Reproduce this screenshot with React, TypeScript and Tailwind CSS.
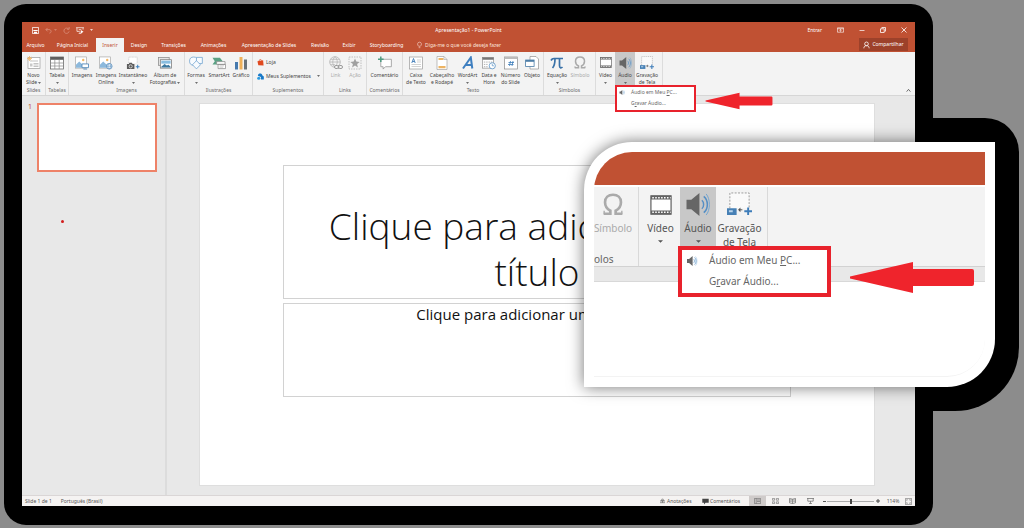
import React from "react";

type IconProps = { className?: string };

const svg = (viewBox: string, children: React.ReactNode) =>
  function Icon({ className = "h-[14px] w-[14px]" }: IconProps) {
    return (
      <svg viewBox={viewBox} className={className} fill="none" aria-hidden="true">
        {children}
      </svg>
    );
  };

const SlideIcon = svg("0 0 14 14", <>
  <rect x="1" y="1.5" width="12" height="11" fill="#fff" stroke="#9a9a9a" strokeWidth=".7" />
  <path d="M3 5h8M6.500 7.500h5M6.500 9h5M6.500 10.500h5" stroke="#a9a9a9" strokeWidth=".7" />
  <path d="M3 7.500h2.500v3H3z" fill="#c9c9c9" />
  <path d="M2.500 0v5M0 2.500h5M.8.8l3.400 3.400M4.200.8.8 4.200" stroke="#f0b568" strokeWidth=".8" />
</>);
const TableIcon = svg("0 0 14 14", <>
  <rect x=".5" y="1" width="13" height="12" fill="#fff" stroke="#6b6b6b" strokeWidth=".8" />
  <path d="M.5 1h13v2.800H.5z" fill="#5f5f5f" />
  <path d="M.5 7h13M.5 10h13M4.800 4v9M9.200 4v9" stroke="#8a8a8a" strokeWidth=".7" />
</>);
const Photo = () => <>
  <rect x=".5" y=".5" width="12" height="12" fill="#fff" stroke="#a3a3a3" strokeWidth=".7" />
  <path d="M1 11V9l3.500-3.500L8 8.500l1.500-1 3 2.500v2H1z" fill="#8db9dc" />
  <circle cx="8.800" cy="3.800" r="1.300" fill="#f2b765" />
</>;
const ImageIcon = svg("0 0 15 14", <>
  <Photo />
  <path d="M7.500 8h7v4h-7z" fill="#fff" stroke="#4e86b8" strokeWidth=".9" />
  <path d="M9 13.500h4" stroke="#4e86b8" strokeWidth=".9" />
</>);
const ImageOnlineIcon = svg("0 0 15 14", <>
  <Photo />
  <circle cx="11" cy="10.500" r="3" fill="#eaf3fb" stroke="#4e86b8" strokeWidth=".8" />
  <path d="M8 10.500h6M11 7.500c-2 2-2 4 0 6 2-2 2-4 0-6" stroke="#4e86b8" strokeWidth=".5" />
</>);
const CameraIcon = svg("0 0 15 14", <>
  <path d="M3 7V.7h9V7" fill="#fff" stroke="#b5b5b5" strokeWidth=".6" strokeDasharray="1 .6" />
  <path d="M1 8h2l.7-1.200h2.600L7 8h2v5.500H1z" fill="#5b5b5b" />
  <circle cx="5" cy="10.600" r="1.700" fill="#5b5b5b" stroke="#fff" strokeWidth=".7" />
  <path d="M12.500 9v4M10.500 11h4" stroke="#3f80bd" strokeWidth="1.100" />
</>);
const AlbumIcon = svg("0 0 15 14", <>
  <rect x=".5" y="1" width="11.500" height="8.500" fill="#e5e5e5" stroke="#8b8b8b" strokeWidth=".8" />
  <rect x="2.500" y="3.500" width="12" height="9" fill="#fff" stroke="#777" strokeWidth=".8" />
  <path d="M3.500 4.500h10v3.200h-10z" fill="#88bde0" />
  <path d="m3.500 11 3.500-3 2.500 1.800 1.700-1 2.300 2.200v.7h-10z" fill="#3c789f" />
</>);
const ShapesIcon = svg("0 0 15 14", <>
  <circle cx="5" cy="5" r="4.400" fill="#f8fbfe" stroke="#6ba0cd" strokeWidth=".8" />
  <path d="M8 1h6.300v6.500H8z" fill="#f8fbfe" stroke="#6ba0cd" strokeWidth=".8" />
  <path d="m8 4.500 4.300 4.400L8 13.300 3.700 8.900z" fill="#f8fbfe" stroke="#6ba0cd" strokeWidth=".8" />
</>);
const SmartArtIcon = svg("0 0 15 14", <>
  <path d="M.5 1.500h8L11.500 5l-3 3.500h-8L3 5z" fill="#5ba184" />
  <path d="M5 5.500h9v3H5zM6.500 8.500h8v4.500h-8z" fill="#fff" stroke="#8c8c8c" strokeWidth=".8" />
  <path d="M8 10h5M8 11.500h4" stroke="#aaa" strokeWidth=".6" />
</>);
const ChartIcon = svg("0 0 14 14", <>
  <path d="M1 6h3v7.500H1z" fill="#4679ad" />
  <path d="M5.500 1h3v12.500h-3z" fill="#eeb05a" />
  <path d="M10 3.500h3v10h-3z" fill="#69727a" />
</>);
const StoreIcon = svg("0 0 8 8", <>
  <path d="m.5 2.500 6.500-1 .5 6L1.500 7z" fill="#e0491f" />
  <path d="M2.500 2.500C2.500-.2 5-.2 5 2" stroke="#e0491f" strokeWidth=".8" />
</>);
const AddinIcon = svg("0 0 8 8", <>
  <path d="M1 3C1 0 6 0 6 2.500L7.800 4v3.500H4.500V4.500z" fill="#1979c8" />
  <circle cx="2" cy="6" r="1.800" fill="#2d9be0" />
</>);
const LinkIcon = svg("0 0 14 14", <>
  <g stroke="#b5b5b5" strokeWidth=".8">
    <circle cx="6" cy="6" r="5.300" />
    <path d="M.7 6h10.600M6 .7c-3 3-3 7.600 0 10.600M6 .7c3 3 3 7 0 10.600M1.500 3.300h9M1.500 8.700H6" />
  </g>
  <rect x="5.500" y="9.500" width="4.500" height="3" rx="1.500" fill="#f3f3f3" stroke="#999" />
  <rect x="9" y="9.500" width="4.500" height="3" rx="1.500" stroke="#999" />
</>);
const ActionIcon = svg("0 0 14 14", <>
  <rect x="1" y="1" width="12" height="12" stroke="#aaa" strokeWidth=".7" strokeDasharray="1.500 1" />
  <path d="m7 2.500 1.300 3.100 3.400.3-2.600 2.200.8 3.300L7 9.600l-2.900 1.800.8-3.300-2.600-2.200 3.400-.3z" fill="#a0a0a0" />
</>);
const CommentIcon = svg("0 0 15 14", <>
  <path d="M3 3h11.300v8H8l-2.500 2.500V11H3z" fill="#fff" stroke="#8f8f8f" strokeWidth=".8" />
  <path d="M3 0v6M0 3h6" stroke="#4e9b80" strokeWidth="1.600" />
</>);
const TextBoxIcon = svg("0 0 14 14", <>
  <rect x=".6" y="1" width="12.800" height="12" fill="#fff" stroke="#9b9b9b" strokeWidth=".7" />
  <path d="m2.800 7 1.700-4.500L6.200 7M3.400 5.500h2.200" stroke="#3b78b5" strokeWidth=".9" />
  <path d="M8 4h4M8 6h4M2.500 8.500H12M2.500 10.500H12" stroke="#c0c0c0" strokeWidth=".7" />
</>);
const HeaderIcon = svg("0 0 12 14", <>
  <path d="M1 .5h7l3 3v10H1z" fill="#fff" stroke="#a5a5a5" strokeWidth=".7" />
  <path d="M2.500 2h5v2h-5zM2.500 10h7v2.200h-7z" fill="#edb463" />
  <path d="M8 .5v3h3" stroke="#a5a5a5" strokeWidth=".6" />
</>);
const WordArtIcon = svg("0 0 14 14", <>
  <path d="M2 12.500 9.800 1.500l1.500 11M5 9h5.500" stroke="#3e7fc0" strokeWidth="2" />
</>);
const DateIcon = svg("0 0 15 14", <>
  <rect x=".5" y="1" width="12" height="11.500" fill="#fff" stroke="#8b8b8b" strokeWidth=".7" />
  <path d="M.5 1h12v2.500H.5z" fill="#777" />
  <path d="M2 6h9M2 8.500h5M2 11h5" stroke="#aaa" strokeDasharray="1.500 1" />
  <circle cx="11" cy="10" r="3.300" fill="#fff" stroke="#4d8ac1" strokeWidth=".8" />
  <path d="M11 8v2h1.800" stroke="#4d8ac1" strokeWidth=".7" />
</>);
const NumberIcon = svg("0 0 14 14", <>
  <rect x=".5" y="1" width="13" height="12" fill="#fff" stroke="#8b8b8b" strokeWidth=".7" />
  <path d="M.5 1h13v2H.5z" fill="#bcbcbc" />
  <path d="m6.500 5-1 5M9 5l-1 5M4.500 6.500H10M4 8.500h5.500" stroke="#3c7cba" strokeWidth=".8" />
</>);
const ObjectIcon = svg("0 0 14 14", <>
  <path d="M5 .5h6l2.500 2.500v10H5z" fill="#fff" stroke="#929292" strokeWidth=".7" />
  <rect x=".6" y="4" width="8.500" height="6.500" fill="#fff" stroke="#4d7ea8" strokeWidth=".8" />
  <path d="M.6 4h8.500v1.800H.6z" fill="#4d7ea8" />
</>);
const PiIcon = svg("0 0 14 14", <>
  <path d="M1 4.500C2 2.500 3 2.500 4 2.500h9M5 2.800c0 4-.5 7-2.500 9.200M9.500 2.800V9.500c0 2.500 1.500 3 3 1.500" stroke="#3a72a8" strokeWidth="1.700" />
</>);
const OmegaIcon = svg("0 0 24 26", <>
  <path d="M1.500 23.500H9V20C5 18 3 14.500 3 10.500 3 5 6.800 2 12 2s9 3 9 8.500c0 4-2 7.500-6 9.500v3.500h7.500" stroke="#aaa" strokeWidth="3" />
  <path d="M2 20v4M22 20v4" stroke="#aaa" strokeWidth="1.500" />
</>);
const VideoIcon = svg("0 0 24 24", <>
  <rect x="1" y="2" width="22" height="20" fill="#fff" stroke="#5f5f5f" strokeWidth="1.300" />
  <path d="M1 2h22v4H1zM1 18h22v4H1z" fill="#626262" />
  <path d="M2.500 4h20M2.500 20h20" stroke="#fff" strokeWidth="1.700" strokeDasharray="1.700 1.500" />
</>);
const SpeakerIcon = svg("0 0 24 24", <>
  <path d="M0 7h5l8.500-7v24L5 17H0z" fill="#666" />
  <path d="M16 7.500c2.500 2 2.500 7 0 9" stroke="#558fc5" strokeWidth="1.500" />
  <path d="M18 3.500c5 4 5 13 0 17" stroke="#558fc5" strokeWidth="1.600" />
  <path d="M20.500 1c4.500 5 4.500 17 0 22" stroke="#72a5d1" strokeWidth="1" />
</>);
const RecordIcon = svg("0 0 26 26", <>
  <path d="M3 17V1h20v16" fill="#fafafa" stroke="#999" strokeWidth="1" strokeDasharray="2 1.500" />
  <path d="M0 17h10v7H0z" fill="#4680b5" />
  <path d="M2 19h4v2H2z" fill="#b9d4ec" />
  <path d="M14 16v5l-2.500-2.500z" fill="#555" />
  <path d="M13 18.500h3" stroke="#555" />
  <path d="M22 16v8M18 20h8" stroke="#3d7cb9" strokeWidth="2" />
</>);
const SaveIcon = svg("0 0 8 8", <>
  <path d="M.5.500h7v7h-7z" stroke="#fff" strokeWidth=".9" />
  <path d="M1.500 3.500h5v1h-5zM2.200 5.500h3.600v2H2.200z" fill="#fff" />
</>);
const UndoIcon = svg("0 0 8 8", <path d="M3 1 1 3l2 2M1 3h3.500c3.500 0 3 4 .5 4" stroke="#d98d78" />);
const RedoIcon = svg("0 0 8 8", <path d="M6.500 2.500A3 3 0 1 0 7 5M4.500 2.500H7V0" stroke="#d98d78" />);
const PresentIcon = svg("0 0 9 8", <>
  <path d="M0 .8h9M1 1v4h3M8 1v2M3 3h3M4.500 5v2M3 7.500h3" stroke="#fff" strokeWidth=".8" />
  <path d="m5.500 3.500 3 2-3 2z" fill="#fff" />
</>);
const BulbIcon = svg("0 0 6 8", <path d="M2 5.500C0 4 .3.600 3 .600s3 3.400 1 4.900zM2 7.200h2" stroke="#fbe3dc" strokeWidth=".7" />);
const RibbonIcon = svg("0 0 8 6", <path d="M.5.500h7v5h-7zM.5 1.600h7M4 5V2.500M2.800 3.500 4 2.400l1.200 1.100" stroke="#fff" strokeWidth=".7" />);
const MinIcon = svg("0 0 6 6", <path d="M.5 3.500h5" stroke="#fff" strokeWidth=".7" />);
const RestoreIcon = svg("0 0 6 6", <path d="M.5 1.800h3.700v3.700H.5zM1.800 1.500V.500h3.700v3.700h-1" stroke="#fff" strokeWidth=".8" />);
const CloseIcon = svg("0 0 6 6", <path d="m.5.500 5 5M5.500.500l-5 5" stroke="#fff" strokeWidth=".8" />);
const PersonIcon = svg("0 0 8 8", <>
  <circle cx="4" cy="2.700" r="2.100" stroke="#fff" strokeWidth=".9" />
  <path d="M1 7.800c0-2 1-3 3-3s3 1 3 3" stroke="#fff" strokeWidth=".9" />
</>);
const NotesIcon = svg("0 0 6 6", <path d="M0 3h6M0 5h6M3 .3 1.300 2.300h3.400zM3 3v2" stroke="#555" strokeWidth=".7" />);
const BubbleIcon = svg("0 0 7 7", <path d="M.3.800h6.400v4H3.500L2 6.500V4.800H.3z" fill="#444" />);
const NormalIcon = svg("0 0 7 6", <path d="M.4.400h6.200v5.200H.4zM2.200.400v5.200M3 2h3M3 3.500h3" stroke="#666" strokeWidth=".6" />);
const SorterIcon = svg("0 0 7 6", <path d="M.4.400h2.200v1.800H.4zM4.400.400h2.200v1.800H4.400zM.4 3.800h2.200v1.800H.4zM4.400 3.800h2.200v1.800H4.400z" stroke="#666" strokeWidth=".6" />);
const ReadingIcon = svg("0 0 7 6", <path d="M3.500 1.200.500.500v4.300l3 .7 3-.7V.500zV5.500M1.200 2h1.500M1.200 3.300h1.500M4.300 2h1.500M4.300 3.300h1.500" stroke="#666" strokeWidth=".7" />);
const ShowIcon = svg("0 0 7 6", <path d="M0 .500h7M.8.500v2.700h5.400V.500M3.500 3.200v2.400M2 5.600h3" stroke="#666" strokeWidth=".7" />);
const FitIcon = svg("0 0 7 7", <path d="M.4.400h6.200v6.200H.4zM1.700 2.700v-1h1M4.300 1.700h1v1M5.300 4.300v1h-1M2.700 5.300h-1v-1" stroke="#666" strokeWidth=".6" />);
const ArrowLeft = svg("0 0 126 33", <path d="M1 15.500 64 1v7h59a2 2 0 0 1 2 2v13a2 2 0 0 1-2 2H64v7L1 17.500z" fill="#ef242c" />);

function Caret({ className = "h-[2px] w-[3px]" }: IconProps) {
  return (
    <svg viewBox="0 0 4 2" className={className} aria-hidden="true">
      <path d="M0 0h4L2 2z" fill="currentColor" />
    </svg>
  );
}

type ToolProps = {
  icon: React.ComponentType<IconProps>;
  lines: string[];
  width: string;
  menu?: boolean;
  disabled?: boolean;
  active?: boolean;
  iconClass?: string;
};

function Tool({ icon: Icon, lines, width, menu, disabled, active, iconClass }: ToolProps) {
  const inline = menu && lines.length > 1;
  return (
    <button
      type="button"
      disabled={disabled}
      className={`flex shrink-0 flex-col items-center pt-[3px] ${width} ${active ? "bg-[#c8c8c8]" : ""} ${disabled ? "text-[#aaa]" : "text-[#444]"}`}
    >
      <span className="mb-[2px] flex h-[15px] items-center">
        <Icon className={iconClass} />
      </span>
      {lines.map((line, i) => (
        <span key={line} className="flex h-[7px] items-center gap-px whitespace-nowrap leading-[7px]">
          {line}
          {inline && i === lines.length - 1 && <Caret />}
        </span>
      ))}
      {menu && !inline && (
        <span className="flex h-[7px] items-center">
          <Caret />
        </span>
      )}
    </button>
  );
}

function Group({ label, width, children }: { label: string; width: string; children: React.ReactNode }) {
  return (
    <section aria-label={label || "Mídia"} className={`flex shrink-0 flex-col border-r border-[#dcdcdc] ${width}`}>
      <div className="flex h-[34px]">{children}</div>
      <div className="h-[9px] whitespace-nowrap text-center leading-[9px] text-[#6a6a6a]">{label}</div>
    </section>
  );
}

const tabs = [
  { name: "Arquivo", width: "w-[27px]" },
  { name: "Página Inicial", width: "w-[47px]" },
  { name: "Inserir", width: "w-[28px]" },
  { name: "Design", width: "w-[30px]" },
  { name: "Transições", width: "w-[39px]" },
  { name: "Animações", width: "w-[41px]" },
  { name: "Apresentação de Slides", width: "w-[70px]" },
  { name: "Revisão", width: "w-[32px]" },
  { name: "Exibir", width: "w-[26px]" },
  { name: "Storyboarding", width: "w-[49px]" },
];

function TitleBar() {
  return (
    <header className="bg-[#c05133] text-white">
      <div className="grid h-4 grid-cols-3 items-center">
        <div className="flex items-center gap-[6px] pl-[10px]">
          <button type="button" aria-label="Salvar"><SaveIcon className="h-[7px] w-[7px]" /></button>
          <button type="button" aria-label="Desfazer" className="flex items-center gap-[2px] text-[#d98d78]">
            <UndoIcon className="h-[7px] w-[7px]" />
            <Caret />
          </button>
          <button type="button" aria-label="Refazer"><RedoIcon className="h-[7px] w-[7px]" /></button>
          <button type="button" aria-label="Apresentar"><PresentIcon className="h-[7px] w-[8px]" /></button>
          <button type="button" aria-label="Personalizar"><Caret /></button>
        </div>
        <h1 className="text-center">Apresentação1 - PowerPoint</h1>
        <div className="flex items-center justify-end gap-[15px] pr-2">
          <button type="button">Entrar</button>
          <button type="button" aria-label="Opções da faixa"><RibbonIcon className="h-[6px] w-[7px]" /></button>
          <button type="button" aria-label="Minimizar"><MinIcon className="h-[6px] w-[6px]" /></button>
          <button type="button" aria-label="Restaurar"><RestoreIcon className="h-[6px] w-[6px]" /></button>
          <button type="button" aria-label="Fechar"><CloseIcon className="h-[6px] w-[6px]" /></button>
        </div>
      </div>
      <nav className="flex h-[14px] items-stretch pr-[7px]">
        {tabs.map((t) => (
          <button
            key={t.name}
            type="button"
            className={`whitespace-nowrap text-center ${t.width} ${t.name === "Inserir" ? "bg-[#f3f3f3] text-[#c05133]" : ""}`}
          >
            {t.name}
          </button>
        ))}
        <button type="button" className="ml-[6px] flex items-center gap-[3px] whitespace-nowrap text-[#fbe3dc]">
          <BulbIcon className="h-[8px] w-[5px]" />
          Diga-me o que você deseja fazer
        </button>
        <button type="button" className="mb-px ml-auto flex w-[49px] items-center justify-center gap-[2px] bg-[#9d412a]">
          <PersonIcon className="h-[8px] w-[7px]" />
          Compartilhar
        </button>
      </nav>
    </header>
  );
}

function Ribbon() {
  return (
    <div className="flex h-[44px] border-b border-[#d6d6d6] bg-[#f3f3f3]">
      <Group label="Slides" width="w-[24px]">
        <Tool icon={SlideIcon} lines={["Novo", "Slide"]} width="w-[23px]" menu />
      </Group>
      <Group label="Tabelas" width="w-[23px]">
        <Tool icon={TableIcon} lines={["Tabela"]} width="w-[22px]" menu />
      </Group>
      <Group label="Imagens" width="w-[116px]">
        <Tool icon={ImageIcon} lines={["Imagens"]} width="w-[26px]" />
        <Tool icon={ImageOnlineIcon} lines={["Imagens", "Online"]} width="w-[22px]" />
        <Tool icon={CameraIcon} lines={["Instantâneo"]} width="w-[32px]" menu />
        <Tool icon={AlbumIcon} lines={["Álbum de", "Fotografias"]} width="w-[32px]" menu />
      </Group>
      <Group label="Ilustrações" width="w-[68px]">
        <Tool icon={ShapesIcon} lines={["Formas"]} width="w-[22px]" menu />
        <Tool icon={SmartArtIcon} lines={["SmartArt"]} width="w-[24px]" />
        <Tool icon={ChartIcon} lines={["Gráfico"]} width="w-[20px]" />
      </Group>
      <Group label="Suplementos" width="w-[71px]">
        <div className="flex flex-1 flex-col gap-[6px] whitespace-nowrap pl-1 pt-[6px] text-[#444]">
          <button type="button" className="flex h-2 items-center gap-[2px]">
            <StoreIcon className="h-[7px] w-[7px]" />
            Loja
          </button>
          <button type="button" className="flex h-2 items-center gap-[2px] pr-[3px]">
            <AddinIcon className="h-[7px] w-[7px]" />
            Meus Suplementos
            <span className="ml-auto"><Caret /></span>
          </button>
        </div>
      </Group>
      <Group label="Links" width="w-[43px]">
        <Tool icon={LinkIcon} lines={["Link"]} width="w-[23px]" disabled />
        <Tool icon={ActionIcon} lines={["Ação"]} width="w-[16px]" disabled />
      </Group>
      <Group label="Comentários" width="w-[36px]">
        <Tool icon={CommentIcon} lines={["Comentário"]} width="w-[35px]" />
      </Group>
      <Group label="Texto" width="w-[141px]">
        <Tool icon={TextBoxIcon} lines={["Caixa", "de Texto"]} width="w-[26px]" />
        <Tool icon={HeaderIcon} lines={["Cabeçalho", "e Rodapé"]} width="w-[26px]" />
        <Tool icon={WordArtIcon} lines={["WordArt"]} width="w-[25px]" menu />
        <Tool icon={DateIcon} lines={["Data e", "Hora"]} width="w-[18px]" />
        <Tool icon={NumberIcon} lines={["Número", "do Slide"]} width="w-[25px]" />
        <Tool icon={ObjectIcon} lines={["Objeto"]} width="w-[18px]" />
      </Group>
      <Group label="Símbolos" width="w-[52px]">
        <Tool icon={PiIcon} lines={["Equação"]} width="w-[26px]" menu />
        <Tool icon={OmegaIcon} lines={["Símbolo"]} width="w-[20px]" disabled iconClass="h-[13px] w-[12px]" />
      </Group>
      <Group label="" width="w-[67px]">
        <Tool icon={VideoIcon} lines={["Vídeo"]} width="w-[19px]" menu iconClass="h-[13px] w-[12px]" />
        <div className="relative flex">
          <Tool icon={SpeakerIcon} lines={["Áudio"]} width="w-[20px]" menu active iconClass="h-[12px] w-[13px]" />
          <div role="menu" className="absolute left-0 top-[33px] z-10 w-[81px] border-2 border-[#e8222c] bg-white pb-px text-[#666]">
            <button type="button" role="menuitem" className="flex h-[11px] w-full items-center whitespace-nowrap">
              <span className="flex w-[14px] pl-[2px]"><SpeakerIcon className="h-[5px] w-[6px]" /></span>
              <span>Áudio em Meu <u>P</u>C...</span>
            </button>
            <button type="button" role="menuitem" className="flex h-[11px] w-full items-center whitespace-nowrap pl-[14px]">
              <span>G<u>r</u>avar Áudio...</span>
            </button>
          </div>
          <ArrowLeft className="absolute left-[90px] top-[40px] z-10 h-[18px] w-[68px]" />
        </div>
        <Tool icon={RecordIcon} lines={["Gravação", "de Tela"]} width="w-[24px]" />
      </Group>
      <button type="button" aria-label="Recolher" className="ml-auto self-end pb-[3px] pr-1">
        <svg viewBox="0 0 6 4" className="h-[3px] w-[5px]" fill="none" aria-hidden="true">
          <path d="m.5 3.500 2.500-3 2.500 3" stroke="#444" />
        </svg>
      </button>
    </div>
  );
}

function Workspace() {
  return (
    <main className="flex flex-1 bg-[#e8e8e8]">
      <aside className="w-[145px] border-r-2 border-[#dcdcdc] pl-[6px] pt-[7px]">
        <div className="flex items-start">
          <span className="w-[9px] text-[7px] leading-2 text-[#c05133]">1</span>
          <button type="button" aria-label="Slide 1" className="h-[69px] w-[120px] border-2 border-[#ee8268] bg-white" />
        </div>
        <div className="ml-[33px] mt-12 h-[3px] w-[3px] rounded-full bg-[#d21c1c]" />
      </aside>
      <div className="flex flex-1 pb-[9px] pl-8 pr-10 pt-[7px]">
        <article className="flex flex-1 flex-col gap-1 border border-[#dedede] bg-white px-[83px] pb-[88px] pt-[61px] text-center font-['Open_Sans',sans-serif] text-[#111]">
          <div className="flex h-[134px] flex-col justify-end border border-[#d2d2d2] pb-[3px]">
            <h2 className="text-[37px] font-light leading-[46px]">
              Clique para adicionar um
              <br />
              título
            </h2>
          </div>
          <div className="flex-1 border border-[#d2d2d2]">
            <p className="text-[15px] leading-[20px]">Clique para adicionar um subtítulo</p>
          </div>
        </article>
      </div>
    </main>
  );
}

function StatusBar() {
  return (
    <footer className="flex h-[11px] items-center border-t border-[#dad6d6] bg-[#f5f3f2] text-[#555]">
      <span className="pl-[3px]">Slide 1 de 1</span>
      <span className="pl-[9px]">Português (Brasil)</span>
      <div className="ml-auto flex h-full items-center">
        <button type="button" className="flex w-[42px] items-center gap-[2px] whitespace-nowrap">
          <NotesIcon className="h-[6px] w-[5px]" />
          Anotações
        </button>
        <button type="button" className="flex w-[47px] items-center gap-px whitespace-nowrap">
          <BubbleIcon className="h-[7px] w-[7px]" />
          Comentários
        </button>
        <button type="button" aria-label="Normal" className="flex h-full w-[17px] items-center justify-center bg-[#cfcbca]">
          <NormalIcon className="h-[6px] w-[7px]" />
        </button>
        <button type="button" aria-label="Classificação" className="flex w-[18px] justify-center">
          <SorterIcon className="h-[6px] w-[7px]" />
        </button>
        <button type="button" aria-label="Leitura" className="flex w-[17px] justify-center">
          <ReadingIcon className="h-[6px] w-[7px]" />
        </button>
        <button type="button" aria-label="Apresentação" className="flex w-[18px] justify-center">
          <ShowIcon className="h-[6px] w-[7px]" />
        </button>
        <button type="button" aria-label="Reduzir" className="ml-[3px] flex w-[5px] justify-center">
          <span className="h-px w-[3px] bg-[#555]" />
        </button>
        <input
          type="range"
          aria-label="Zoom"
          min={10}
          max={400}
          defaultValue={212}
          className="h-[5px] w-[47px] appearance-none bg-[linear-gradient(#aaa,#aaa)] bg-[length:100%_1px] bg-center bg-no-repeat [&::-webkit-slider-thumb]:h-[5px] [&::-webkit-slider-thumb]:w-[2px] [&::-webkit-slider-thumb]:appearance-none [&::-webkit-slider-thumb]:bg-[#444]"
        />
        <button type="button" aria-label="Ampliar" className="flex w-[7px] justify-center">
          <svg viewBox="0 0 4 4" className="h-[4px] w-[4px]" aria-hidden="true">
            <path d="M2 0v4M0 2h4" stroke="#444" />
          </svg>
        </button>
        <span className="w-[24px] text-center">114%</span>
        <button type="button" aria-label="Ajustar" className="mr-[3px]"><FitIcon className="h-[7px] w-[7px]" /></button>
      </div>
    </footer>
  );
}

type BigToolProps = {
  icon: React.ComponentType<IconProps>;
  lines: string[];
  className: string;
  iconClass: string;
  menu?: boolean;
};

function BigTool({ icon: Icon, lines, className, iconClass, menu }: BigToolProps) {
  return (
    <button type="button" className={`flex shrink-0 flex-col items-center pt-1 ${className}`}>
      <span className="flex h-[27px] items-center"><Icon className={iconClass} /></span>
      <span className="mt-[3px] flex flex-col whitespace-nowrap text-[10px] leading-[14px]">
        {lines.map((l) => <span key={l}>{l}</span>)}
      </span>
      {menu && <span className="flex h-[12px] items-center"><Caret className="h-[3px] w-[5px]" /></span>}
    </button>
  );
}

function Callout() {
  return (
    <section
      aria-label="Detalhe do menu Áudio"
      className="absolute right-[29px] top-[142px] w-[411px] rounded-br-[48px] rounded-tl-[48px] bg-white p-[10px] shadow-[0_0_16px_rgba(0,0,0,0.55)]"
    >
      <div className="h-[225px] overflow-hidden rounded-br-[38px] rounded-tl-[38px] border-b border-[#f3f3f3]">
        <div className="h-[33px] bg-[#c05133]" />
        <div className="mt-[2px] flex h-[80px] border-b border-[#d2d2d2] bg-[#f3f3f3] text-[#555]">
          <div className="flex w-[45px] flex-col border-r border-[#d9d9d9]">
            <BigTool icon={OmegaIcon} lines={["Símbolo"]} className="w-[38px] text-[#aaa]" iconClass="h-[23px] w-[22px]" />
            <span className="mt-auto text-[10px] leading-[14px] text-[#666]">olos</span>
          </div>
          <BigTool icon={VideoIcon} lines={["Vídeo"]} className="w-[41px] pl-[2px]" iconClass="h-[22px] w-[22px]" menu />
          <div className="relative flex">
            <BigTool icon={SpeakerIcon} lines={["Áudio"]} className="w-[36px] bg-[#c8c8c8]" iconClass="h-[23px] w-[24px]" menu />
            <div role="menu" className="absolute -left-[2px] top-[59px] z-10 w-[153px] border-4 border-[#e8222c] bg-white pb-px text-[10px] text-[#666]">
              <button type="button" role="menuitem" className="flex h-[21px] w-full items-center whitespace-nowrap">
                <span className="flex w-[27px] pl-1"><SpeakerIcon className="h-[10px] w-[12px]" /></span>
                <span>Áudio em Meu <u>P</u>C...</span>
              </button>
              <button type="button" role="menuitem" className="flex h-[21px] w-full items-center whitespace-nowrap pl-[27px]">
                <span>G<u>r</u>avar Áudio...</span>
              </button>
            </div>
            <ArrowLeft className="absolute left-[169px] top-[74px] z-10 h-[33px] w-[126px]" />
          </div>
          <BigTool icon={RecordIcon} lines={["Gravação", "de Tela"]} className="w-[52px] border-r border-[#d9d9d9] pr-1" iconClass="h-[25px] w-[25px]" />
        </div>
        <div className="h-[15px] border-b border-[#d8d8d8] bg-[#e8e8e8]" />
      </div>
    </section>
  );
}

export default function App() {
  return (
    <div className="relative flex min-h-screen bg-[#8c8c8c] pb-[3px] pl-1 pr-[91px] pt-1 font-['Noto_Sans','Open_Sans',sans-serif] text-[5px] leading-[7px]">
      <div className="absolute right-[5px] top-[118px] h-[293px] w-[200px] rounded-br-[64px] rounded-tr-[34px] bg-black" />
      <div className="relative flex flex-1 rounded-[22px] bg-black px-[18px] pb-[19px] pt-[18px]">
        <div className="flex min-w-0 flex-1 flex-col bg-white">
          <TitleBar />
          <Ribbon />
          <Workspace />
          <StatusBar />
        </div>
      </div>
      <Callout />
    </div>
  );
}
